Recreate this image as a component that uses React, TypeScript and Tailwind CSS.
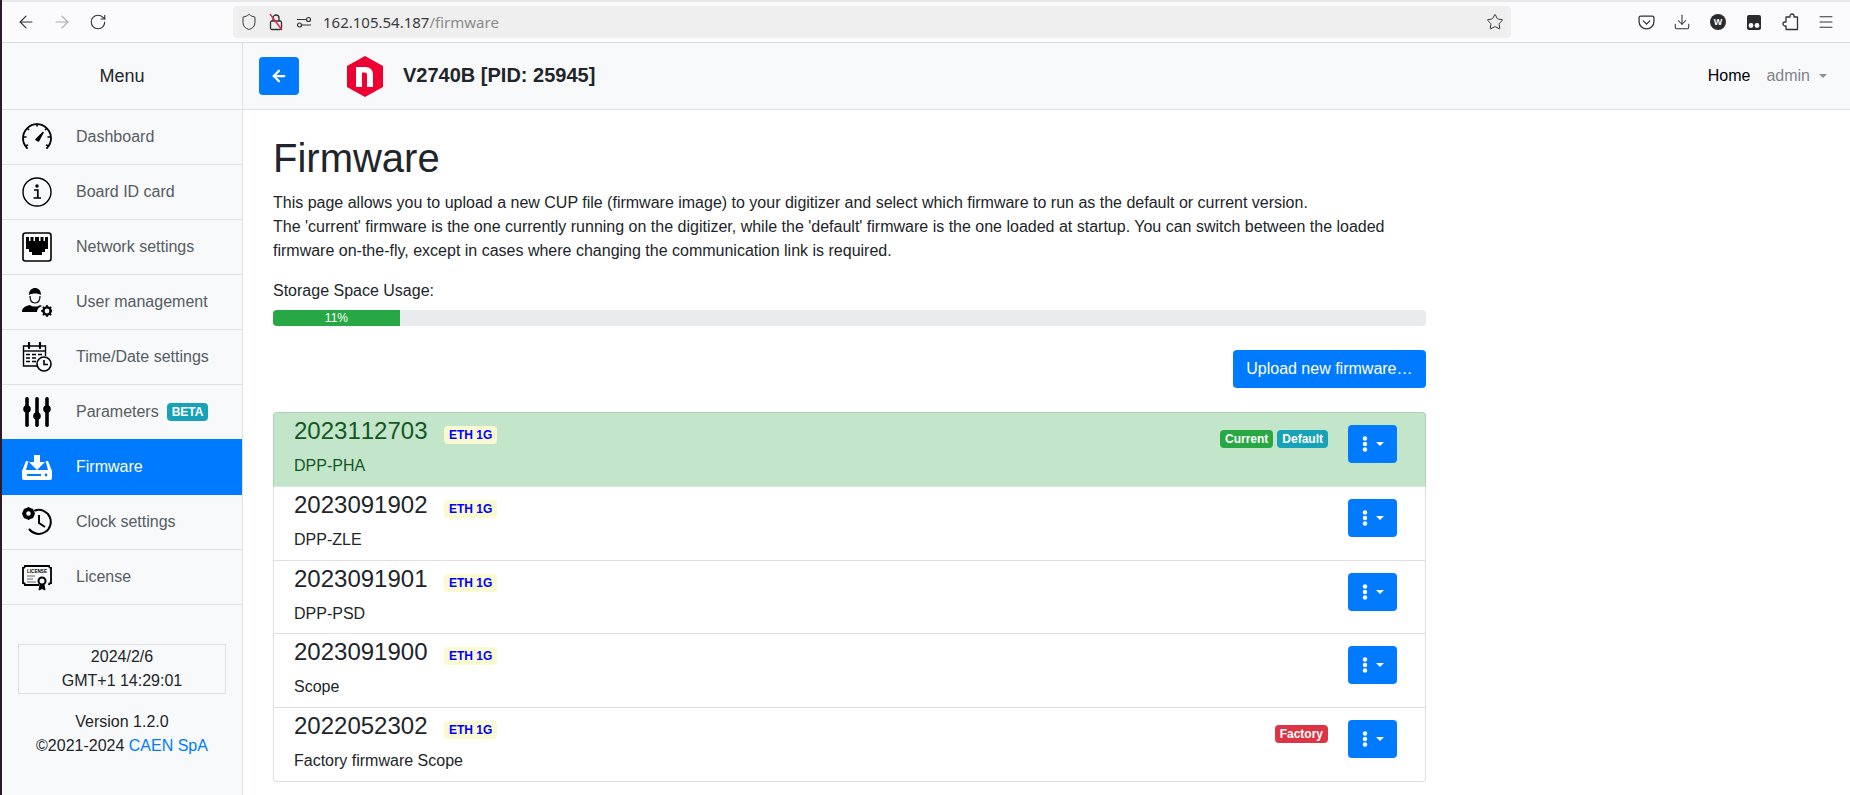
import { ArrowLeft, ArrowRight, RotateCw, Shield, Star, Download, Menu as MenuIcon } from 'lucide-react';

const sans = { fontFamily: '"Liberation Sans", Arial, sans-serif' };

function GaugeIcon() {
  return (
    <svg width="30" height="30" viewBox="0 0 30 30" fill="none" stroke="currentColor">
      <path d="M5 26 A14 14 0 1 1 25 26" strokeWidth="1.8" strokeLinecap="round" />
      <path d="M3 24l3-1M27 24l-3-1M1.5 15h3M28.5 15h-3M5 6l2 2M25 6l-2 2M15 1.5v3" strokeWidth="1.6" />
      <path d="M14 17.5 L21 10.5 L16.5 19 Z" fill="currentColor" strokeWidth="1.6" strokeLinejoin="round" />
    </svg>
  );
}

function InfoIcon() {
  return (
    <svg width="30" height="30" viewBox="0 0 30 30" fill="none" stroke="currentColor">
      <circle cx="15" cy="15" r="14" strokeWidth="1.4" />
      <circle cx="15" cy="9" r="1.7" fill="currentColor" stroke="none" />
      <path d="M12 13h3.8v7.5M11.5 21h7.5" strokeWidth="1.7" />
    </svg>
  );
}

function NetworkIcon() {
  return (
    <svg width="30" height="30" viewBox="0 0 30 30">
      <rect x="1" y="1" width="28" height="28" rx="2.5" fill="#fff" stroke="currentColor" strokeWidth="1.6" />
      <path fill="currentColor" d="M4 5h3v4h1.5V5h3v4H13V5h4v4h1.5V5h3v4H23V5h3v12h-3v3h-3v3H10v-3H7v-3H4z" />
    </svg>
  );
}

function UserGearIcon() {
  return (
    <svg width="30" height="30" viewBox="0 0 30 30" fill="currentColor">
      <path d="M7 8c0-5 3-7 6-7s6 2 6 7c-3-2-9-2-12 0z" />
      <path d="M8 9c0 5 2 7 5 7s5-2 5-7" fill="none" stroke="currentColor" strokeWidth="1.2" />
      <path d="M0 25c0-4 3-6 8-7 2 2 8 2 10 0l2 1c-3 1-5 3-5 6z" />
      <circle cx="25" cy="24" r="3.6" fill="none" stroke="currentColor" strokeWidth="2.4" />
      <path d="M25 18v2.5M25 27.5V30M19 24h2.5M28.5 24H31M20.8 19.8l1.8 1.8M27.4 26.4l1.8 1.8M20.8 28.2l1.8-1.8M27.4 21.6l1.8-1.8" stroke="currentColor" strokeWidth="1.6" />
    </svg>
  );
}

function CalendarClockIcon() {
  return (
    <svg width="30" height="30" viewBox="0 0 30 30" fill="none" stroke="currentColor">
      <path d="M15 24H1.5V4h22v10" strokeWidth="1.4" />
      <path d="M1.5 9h22" strokeWidth="1.4" />
      <path d="M7 1v5M18 1v5" strokeWidth="2.2" strokeLinecap="round" />
      <path d="M4 12.5h4M10 12.5h4M16 12.5h4M4 16h4M10 16h4M4 19.5h4M10 19.5h4" strokeWidth="1.4" />
      <circle cx="22" cy="22" r="7" fill="#f8f9fa" strokeWidth="1.6" />
      <path d="M22 18v4.5h4" strokeWidth="1.6" />
    </svg>
  );
}

function SlidersIcon() {
  return (
    <svg width="30" height="30" viewBox="0 0 30 30" fill="currentColor">
      <rect x="3.2" y="0" width="3.6" height="30" rx="1.8" />
      <rect x="13.2" y="0" width="3.6" height="30" rx="1.8" />
      <rect x="23.2" y="0" width="3.6" height="30" rx="1.8" />
      <circle cx="5" cy="12" r="3.8" />
      <circle cx="15" cy="19" r="3.8" />
      <circle cx="25" cy="12" r="3.8" />
    </svg>
  );
}

function FirmwareIcon() {
  return (
    <svg width="30" height="30" viewBox="0 0 30 30" fill="#fff">
      <path d="M12 3h6v7h5l-8 8-8-8h5z" />
      <path d="M4 9h2.4L4 18h22l-2.4-9H26l4 10v7a2 2 0 0 1-2 2H2a2 2 0 0 1-2-2v-7z" />
      <rect x="5" y="22" width="14" height="2" fill="#007bff" />
      <circle cx="24" cy="23" r="1.4" fill="#007bff" />
    </svg>
  );
}

function ClockGearIcon() {
  return (
    <svg width="30" height="30" viewBox="0 0 30 30" fill="none" stroke="currentColor">
      <circle cx="6.5" cy="6.5" r="4.2" strokeWidth="3.8" />
      <path d="M6.5 0v2M6.5 11v2M0 6.5h2M11 6.5h2M2 2l1.5 1.5M9.5 9.5L11 11M2 11l1.5-1.5M9.5 3.5L11 2" strokeWidth="1.4" />
      <path d="M13 3.5 A12 12 0 1 1 7.5 22.5" strokeWidth="2" strokeLinecap="round" />
      <path d="M17 8v8l6 4" strokeWidth="2" />
    </svg>
  );
}

function LicenseIcon() {
  return (
    <svg width="30" height="30" viewBox="0 0 30 30" fill="none" stroke="currentColor">
      <path d="M17 23H3a2 2 0 0 0-2-2V6a2 2 0 0 0 2-2h24a2 2 0 0 0 2 2v15a2 2 0 0 0-2 2" strokeWidth="1.8" />
      <text x="15" y="11" textAnchor="middle" fontSize="4.6" fontWeight="700" fill="currentColor" stroke="none" style={sans}>LICENSE</text>
      <path d="M5 14h8M5 17h6M5 20h9" strokeWidth="1" opacity="0.6" />
      <circle cx="20" cy="19" r="3.5" strokeWidth="2" />
      <path d="M18 23l-1 5 3-1.5 3 1.5-1-5" fill="currentColor" strokeWidth="1" />
    </svg>
  );
}

function LockSlashIcon() {
  return (
    <svg width="16" height="18" viewBox="0 0 16 18" fill="none">
      <path d="M5 8V5a3 3 0 0 1 6 0v3" stroke="#333" strokeWidth="1.3" />
      <rect x="2.5" y="8" width="11" height="8.5" rx="1.5" stroke="#333" strokeWidth="1.3" />
      <path d="M2 1l12 16" stroke="#e22850" strokeWidth="1.4" />
    </svg>
  );
}

function PermissionsIcon() {
  return (
    <svg width="16" height="16" viewBox="0 0 16 16" fill="none" stroke="#333" strokeWidth="1.2">
      <path d="M1 5.5h9M6 11h9" />
      <circle cx="12.5" cy="5.5" r="2" />
      <circle cx="3.5" cy="11" r="2" />
    </svg>
  );
}

function PocketIcon() {
  return (
    <svg width="17" height="17" viewBox="0 0 16 16" fill="none" stroke="#333" strokeWidth="1.2">
      <path d="M2.5 2h11A1.5 1.5 0 0 1 15 3.5V7a7 7 0 0 1-14 0V3.5A1.5 1.5 0 0 1 2.5 2z" />
      <path d="M5 6.5L8 9.5l3-3" strokeLinecap="round" />
    </svg>
  );
}

function TabIcon() {
  return (
    <svg width="16" height="16" viewBox="0 0 16 16" fill="#2b2b2b">
      <path d="M3 1h10a2 2 0 0 1 2 2v11a2 2 0 0 1-2 2H3a2 2 0 0 1-2-2V3a2 2 0 0 1 2-2z" />
      <circle cx="5" cy="11.5" r="2.4" fill="#fff" />
      <circle cx="11" cy="11.5" r="2.4" fill="#fff" />
    </svg>
  );
}

function PuzzleIcon() {
  return (
    <svg width="17" height="18" viewBox="0 0 17 18" fill="none" stroke="#333" strokeWidth="1.3" strokeLinejoin="round">
      <path d="M8 4V3a2 2 0 0 1 4 0v1h3.5v12.5H4V13H3a2 2 0 0 1 0-4h1V4z" />
    </svg>
  );
}

function NuclLogo() {
  return (
    <svg width="36" height="41" viewBox="0 0 36 41">
      <path d="M18 0 L36 10 V31 L18 41 L0 31 V10 Z" fill="#ee0033" />
      <path d="M9 31V11h10a7 7 0 0 1 7 7v13h-6V18.5a2 2 0 0 0-2-2h-3V31z" fill="#fff" />
    </svg>
  );
}

function KebabIcon() {
  return (
    <svg width="6" height="16" viewBox="0 0 6 16" fill="#fff">
      <circle cx="3" cy="2.5" r="2.2" />
      <circle cx="3" cy="8" r="2.2" />
      <circle cx="3" cy="13.5" r="2.2" />
    </svg>
  );
}

const menuItems = [
  { label: 'Dashboard', icon: <GaugeIcon /> },
  { label: 'Board ID card', icon: <InfoIcon /> },
  { label: 'Network settings', icon: <NetworkIcon /> },
  { label: 'User management', icon: <UserGearIcon /> },
  { label: 'Time/Date settings', icon: <CalendarClockIcon /> },
  { label: 'Parameters', icon: <SlidersIcon />, beta: true },
  { label: 'Firmware', icon: <FirmwareIcon />, active: true },
  { label: 'Clock settings', icon: <ClockGearIcon /> },
  { label: 'License', icon: <LicenseIcon /> },
];

const firmwares = [
  { version: '2023112703', name: 'DPP-PHA', current: true },
  { version: '2023091902', name: 'DPP-ZLE' },
  { version: '2023091901', name: 'DPP-PSD' },
  { version: '2023091900', name: 'Scope' },
  { version: '2022052302', name: 'Factory firmware Scope', factory: true },
];

function Badge({ className, children }: { className: string; children: React.ReactNode }) {
  return (
    <span className={`inline-block rounded-[4px] px-[5px] pt-[3px] pb-[3px] text-[12px] leading-[12px] font-bold ${className}`}>
      {children}
    </span>
  );
}

function BrowserBar() {
  return (
    <div className="flex h-[43px] shrink-0 flex-col border-b border-[#dcdcdc] bg-[#fbfbfd]">
      <div className="h-[2px] shrink-0 bg-[#e8e8e8]" />
      <div className="flex flex-1 items-center pl-[6px] text-[#333]">
        <div className="flex w-9 justify-center"><ArrowLeft size={20} strokeWidth={1.4} /></div>
        <div className="flex w-9 justify-center text-[#aaa]"><ArrowRight size={20} strokeWidth={1.4} /></div>
        <div className="flex w-9 justify-center"><RotateCw size={18} strokeWidth={1.5} /></div>
        <div
          className="ml-[117px] flex h-[32px] w-[1278px] items-center rounded-[4px] bg-[#efefef] pl-[7px] text-[15px]"
          style={{ fontFamily: '"Noto Sans", sans-serif' }}
        >
          <Shield size={18} strokeWidth={1.3} />
          <div className="ml-[10px]"><LockSlashIcon /></div>
          <div className="ml-[12px]"><PermissionsIcon /></div>
          <div className="ml-[11px] text-[#3c3c3c]">
            162.105.54.187<span className="text-[#8a8a8a]">/firmware</span>
          </div>
          <div className="mr-[7px] ml-auto"><Star size={18} strokeWidth={1.3} /></div>
        </div>
        <div className="ml-[117px] flex items-center">
          <div className="flex w-9 justify-center"><PocketIcon /></div>
          <div className="flex w-9 justify-center"><Download size={18} strokeWidth={1.4} /></div>
          <div className="flex w-9 justify-center">
            <span className="flex h-4 w-4 items-center justify-center rounded-full bg-[#2b2b2b] text-[9px] leading-none font-bold text-white" style={sans}>W</span>
          </div>
          <div className="flex w-9 justify-center"><TabIcon /></div>
          <div className="flex w-9 justify-center"><PuzzleIcon /></div>
          <div className="flex w-9 justify-center"><MenuIcon size={18} strokeWidth={1.4} /></div>
        </div>
      </div>
    </div>
  );
}

function Sidebar() {
  return (
    <aside className="flex w-[241px] shrink-0 flex-col border-r border-[#dee2e6] bg-[#f8f9fa]">
      <div className="flex h-[67px] shrink-0 items-center justify-center border-b border-[#dee2e6] text-[18px] text-[#212529]">
        Menu
      </div>
      {menuItems.map((item) => (
        <div
          key={item.label}
          className={
            item.active
              ? '-mt-[1px] flex h-[56px] shrink-0 items-center gap-[24px] bg-[#007bff] pl-[20px] text-white'
              : 'flex h-[55px] shrink-0 items-center gap-[24px] border-b border-[#dee2e6] pl-[20px] text-[#555c63]'
          }
        >
          <span className={item.active ? 'text-white' : 'text-black'}>{item.icon}</span>
          <span>{item.label}</span>
          {item.beta && <Badge className="-ml-[16px] bg-[#17a2b8] text-white">BETA</Badge>}
        </div>
      ))}
      <div className="mx-[16px] mt-[39px] border border-[#dee2e6] text-center leading-[24px] text-[#212529]">
        <div>2024/2/6</div>
        <div>GMT+1 14:29:01</div>
      </div>
      <div className="mt-[16px] text-center leading-[24px] text-[#212529]">
        <div>Version 1.2.0</div>
        <div>
          ©2021-2024 <span className="text-[#007bff]">CAEN SpA</span>
        </div>
      </div>
    </aside>
  );
}

function FirmwareRow({ fw, first, last }: { fw: (typeof firmwares)[number]; first: boolean; last: boolean }) {
  const corners = first ? 'rounded-t-[4px]' : last ? 'rounded-b-[4px]' : '';
  const colors = fw.current
    ? 'border-[#a9d3b4] border-b-[#dee2e6] bg-[#c3e6cb] text-[#155724]'
    : 'border-[#dfdfdf] bg-white text-[#212529]';
  return (
    <div className={`flex h-[73.8px] items-start justify-between border border-t-0 first:h-[74.8px] first:border-t ${corners} ${colors} pr-[28px] pl-[20px]`}>
      <div className="pt-[3px]">
        <div className="flex h-[29px] items-start">
          <span className="text-[24px] leading-[29px] [font-kerning:none]">{fw.version}</span>
          <span className="mt-[10px] ml-[17px] rounded-[4px] bg-[#fafad2] px-[4.5px] py-[3px] text-[12px] leading-[12px] font-bold text-[#0000ff]">ETH 1G</span>
        </div>
        <div className="mt-[9px] leading-[24px]">{fw.name}</div>
      </div>
      <div className="flex items-start pt-[12px]">
        <div className="mt-[5px] mr-[20px] flex gap-[4px]">
          {fw.current && <Badge className="bg-[#28a745] text-white">Current</Badge>}
          {fw.current && <Badge className="bg-[#17a2b8] text-white">Default</Badge>}
          {fw.factory && <Badge className="bg-[#dc3545] text-white">Factory</Badge>}
        </div>
        <button className="flex h-[38px] w-[49px] items-center justify-center gap-[8px] rounded-[4px] bg-[#007bff]">
          <KebabIcon />
          <span className="h-0 w-0 border-x-[4.8px] border-t-[4.8px] border-x-transparent border-t-white" />
        </button>
      </div>
    </div>
  );
}

export default function App() {
  return (
    <div className="flex h-[795px] w-full overflow-hidden bg-white text-[16px] text-[#212529]" style={sans}>
      <div className="w-[2px] shrink-0 bg-[#2c1a28]" />
      <div className="flex min-w-0 flex-1 flex-col">
        <BrowserBar />
        <div className="flex min-h-0 flex-1">
          <Sidebar />
          <div className="flex min-w-0 flex-1 flex-col">
            <nav className="flex h-[67px] shrink-0 items-center border-b border-[#dee2e6] bg-[#f8f9fa] pl-[16px]">
              <button className="flex h-[38px] w-[40px] items-center justify-center rounded-[4px] bg-[#007bff] text-white">
                <ArrowLeft size={18} strokeWidth={3} />
              </button>
              <div className="ml-[48px]"><NuclLogo /></div>
              <div className="mb-[2px] ml-[20px] text-[20px] leading-[24px] font-bold text-[#212529]">V2740B [PID: 25945]</div>
              <div className="ml-auto flex items-center pr-[23px]">
                <span className="text-black">Home</span>
                <span className="ml-[16px] text-[#7f8489]">admin</span>
                <span className="ml-[9px] h-0 w-0 border-x-[4.8px] border-t-[4.8px] border-x-transparent border-t-[#8a8f94]" />
              </div>
            </nav>
            <main className="w-[1213px] px-[30px] pt-[24px]">
              <h1 className="mb-[9px] text-[40px] leading-[48px] font-medium">Firmware</h1>
              <p className="mb-[16px] leading-[24px]">
                This page allows you to upload a new CUP file (firmware image) to your digitizer and select which firmware to run as the default or current version.
                <br />
                The 'current' firmware is the one currently running on the digitizer, while the 'default' firmware is the one loaded at startup. You can switch between the loaded firmware on-the-fly, except in cases where changing the communication link is required.
              </p>
              <div className="mb-[7px] leading-[24px]">Storage Space Usage:</div>
              <div className="flex h-[16px] overflow-hidden rounded-[4px] bg-[#e9ecef]">
                <div className="w-[11%] bg-[#28a745] text-center text-[12px] leading-[16px] text-white">11%</div>
              </div>
              <div className="mt-[24px] flex justify-end">
                <button className="h-[38px] rounded-[4px] bg-[#007bff] px-[13.5px] text-white">Upload new firmware…</button>
              </div>
              <div className="mt-[24px]">
                {firmwares.map((fw, i) => (
                  <FirmwareRow key={fw.version} fw={fw} first={i === 0} last={i === firmwares.length - 1} />
                ))}
              </div>
            </main>
          </div>
        </div>
      </div>
    </div>
  );
}
